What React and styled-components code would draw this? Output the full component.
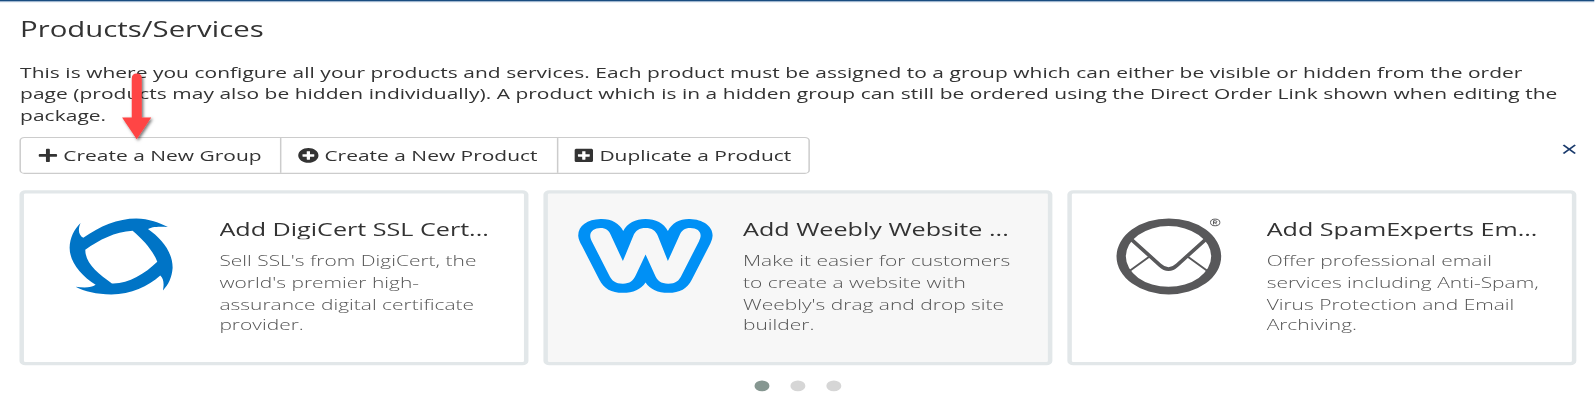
import React from 'react';
import styled, { createGlobalStyle } from 'styled-components';
import { FaPlus, FaPlusCircle, FaPlusSquare } from 'react-icons/fa';

const SX = 1.497;
const SY = 1.087;
const x = (n) => `${n / SX}px`;
const y = (n) => `${n / SY}px`;

const Global = createGlobalStyle`
  body { margin: 0; background: #fff; overflow: hidden; }
  *, *::before, *::after { box-sizing: border-box; }
`;

const Viewport = styled.div`
  width: 1595px;
  height: 412px;
  overflow: hidden;
  background: #fff;
`;

const Page = styled.main`
  position: relative;
  width: ${x(1595)};
  height: ${y(412)};
  transform: scale(${SX}, ${SY});
  transform-origin: 0 0;
  font-family: 'Open Sans', 'Noto Sans', sans-serif;
  font-size: 14px;
  line-height: 19.85px;
  color: #333;
`;

const TopBar = styled.div`
  height: ${y(2)};
  background: linear-gradient(#1a4d80 50%, #9fb6cf 50%);
`;

const Content = styled.div`
  padding: 0 ${x(19)} 0 ${x(20.1)};
`;

const Heading = styled.h1`
  margin: 0;
  height: ${y(59.5)};
  padding-top: ${y(15)};
  font-size: 19.6px;
  line-height: 22px;
  font-weight: 400;
`;

const Intro = styled.p`
  margin: 0;
  padding-right: ${x(10)};
  height: ${y(75.8)};
  letter-spacing: 0.018px;
`;

const Toolbar = styled.div`
  display: flex;
  justify-content: space-between;
  height: ${y(53)};
`;

const ButtonGroup = styled.div`
  display: flex;
  height: ${y(36.6)};
  border: 1px solid #ccc;
  border-radius: ${x(5)};
`;

const Button = styled.button`
  display: flex;
  align-items: center;
  gap: ${x(5)};
  width: ${(p) => x(p.$width)};
  padding: 0 0 0 ${(p) => x(p.$inset)};
  border: 0;
  border-left: ${(p) => (p.$divided ? '1px solid #ccc' : '0')};
  background: none;
  font: inherit;
  color: #333;
  white-space: nowrap;
  svg { flex: none; height: 14px; width: auto; }
`;

const Close = styled.a`
  width: ${x(15.3)};
  padding-top: ${y(0.5)};
  font-size: 20px;
  line-height: 20px;
  color: #1a3a6c;
`;

const Cards = styled.div`
  display: grid;
  grid-template-columns: repeat(3, 1fr);
  column-gap: ${x(15)};
  height: ${y(174.5)};
`;

const Card = styled.article`
  display: flex;
  border: 3px solid #e2e7e9;
  border-radius: 4px;
  background: ${(p) => (p.$active ? '#f7f7f7' : '#fff')};
`;

const LogoBox = styled.div`
  flex: none;
  width: ${x(194.8)};
  padding-top: ${y(12)};
  svg { display: block; width: ${x(195)}; height: ${y(100)}; }
`;

const CardText = styled.div`
  width: ${x(280)};
  padding-top: ${y(25.6)};
`;

const CardTitle = styled.h4`
  margin: 0 0 ${y(10.6)};
  overflow: hidden;
  white-space: nowrap;
  font-size: 16.8px;
  line-height: 18.5px;
  font-weight: 400;
`;

const CardDesc = styled.p`
  margin: 0;
  font-weight: 300;
  color: #555;
`;

const Dots = styled.div`
  display: flex;
  justify-content: center;
  gap: ${x(20.8)};
  padding-top: ${y(15.5)};
`;

const Dot = styled.span`
  width: ${x(15.1)};
  height: ${y(11)};
  border-radius: 50%;
  background: ${(p) => (p.$on ? '#869791' : '#d6d6d6')};
`;

const Pointer = styled.svg`
  position: absolute;
  left: ${x(114.4)};
  top: ${y(66.3)};
  width: ${x(50)};
  height: ${y(84)};
`;

const DigiCertLogo = () => (
  <svg viewBox="0 0 585 300" preserveAspectRatio="none">
    <g transform="translate(107 0)">
      <path
        fill="#0074c6"
        fillRule="evenodd"
        d="M63 53 C54 72 57 89 71 97 C120 62 175 39 230 39 C268 40 300 51 325 65 C300 62 274 64 265 71 C305 99 340 140 339 188 C337 215 327 238 310 255 C314 235 312 219 302 210 C265 242 215 267 155 267 C110 267 75 258 48 244 C75 248 96 247 108 238 C65 211 30 170 30 127 C31 98 43 72 63 53 Z M77 133 C120 103 165 79 219 76 C250 102 280 135 293 169 C255 206 205 236 157 234 C115 204 77 174 77 133 Z"
      />
    </g>
  </svg>
);

const WeeblyLogo = () => (
  <svg viewBox="0 0 585 300" preserveAspectRatio="none">
    <g transform="translate(66 0)">
      <path
        fill="#0090f5"
        d="M92 41 C125 40 148 54 160 77 C172 53 197 41 227 41 C257 41 282 53 294 77 C306 53 330 40 360 41 C400 42 430 64 428 92 C427 103 423 112 418 121 L366 222 C352 250 330 262 295 262 C264 262 241 252 227 231 C213 252 190 262 159 262 C124 262 102 250 88 222 L36 121 C30 111 26 102 25 92 C24 62 52 42 92 41 Z"
      />
      <path
        fill="#f7f7f7"
        d="M92 68 C108 68 117 76 122 87 L159 167 L190 92 C197 76 208 68 227 68 C246 68 257 76 264 92 L294 167 L330 87 C336 76 344 68 361 68 C382 68 394 79 392 93 C391 99 389 103 387 108 L336 208 C327 227 317 235 295 235 C273 235 262 226 255 209 L227 147 L198 209 C190 226 180 235 159 235 C137 235 126 227 117 208 L66 108 C63 102 61 97 61 91 C61 77 75 68 92 68 Z"
      />
    </g>
  </svg>
);

const SpamExpertsLogo = () => (
  <svg viewBox="0 0 585 300" preserveAspectRatio="none">
    <g transform="translate(100 0)" fill="none" stroke="#58585a">
      <path
        fill="#58585a"
        stroke="none"
        fillRule="evenodd"
        d="M34 153 A157 114 0 0 1 348 153 A157 114 0 0 1 34 153 Z M62 153 A128 91 0 0 0 318 153 A128 91 0 0 0 62 153 Z"
      />
      <path strokeWidth="11" d="M80 103 L164 179 Q190 203 216 179 L300 103" />
      <path strokeWidth="6" d="M132 154 L74 196 M248 154 L306 196" />
      <ellipse cx="330" cy="51" rx="14" ry="10" strokeWidth="3" />
      <path strokeWidth="3" d="M325 57 V46 H331 Q335 46 335 49 T331 52 H325 M330 52 L335 57" />
    </g>
  </svg>
);

const cards = [
  {
    Logo: DigiCertLogo,
    title: 'Add DigiCert SSL Cert...',
    text: "Sell SSL's from DigiCert, the world's premier high-assurance digital certificate provider.",
  },
  {
    Logo: WeeblyLogo,
    title: 'Add Weebly Website ...',
    text: "Make it easier for customers to create a website with Weebly's drag and drop site builder.",
    active: true,
  },
  {
    Logo: SpamExpertsLogo,
    title: 'Add SpamExperts Em...',
    text: 'Offer professional email services including Anti-Spam, Virus Protection and Email Archiving.',
  },
];

export default function App() {
  return (
    <Viewport>
      <Global />
      <Page>
        <TopBar />
        <Content>
          <Heading>Products/Services</Heading>
          <Intro>
            This is where you configure all your products and services. Each product must be assigned to a group which
            can either be visible or hidden from the order page (products may also be hidden individually). A product
            which is in a hidden group can still be ordered using the Direct Order Link shown when editing the package.
          </Intro>
          <Toolbar>
            <ButtonGroup>
              <Button $width={258} $inset={15.8}><FaPlus />Create a New Group</Button>
              <Button $width={277} $inset={17.4} $divided><FaPlusCircle />Create a New Product</Button>
              <Button $width={252.5} $inset={15.4} $divided><FaPlusSquare />Duplicate a Product</Button>
            </ButtonGroup>
            <Close>×</Close>
          </Toolbar>
          <Cards>
            {cards.map(({ Logo, title, text, active }) => (
              <Card key={title} $active={active}>
                <LogoBox><Logo /></LogoBox>
                <CardText>
                  <CardTitle>{title}</CardTitle>
                  <CardDesc>{text}</CardDesc>
                </CardText>
              </Card>
            ))}
          </Cards>
          <Dots><Dot $on /><Dot /><Dot /></Dots>
        </Content>
        <Pointer viewBox="0 0 50 84" preserveAspectRatio="none">
          <defs>
            <filter id="shade" x="-30%" y="-10%" width="170%" height="130%">
              <feDropShadow dx="1.5" dy="1.5" stdDeviation="1.8" floodColor="#000" floodOpacity="0.55" />
            </filter>
          </defs>
          <path
            filter="url(#shade)"
            fill="#ff4444"
            d="M18 12 Q18 7.3 23 7.3 Q28 7.3 28 12 V51.3 H37.5 L23 73 L8.3 51.3 H18 Z"
          />
        </Pointer>
      </Page>
    </Viewport>
  );
}
